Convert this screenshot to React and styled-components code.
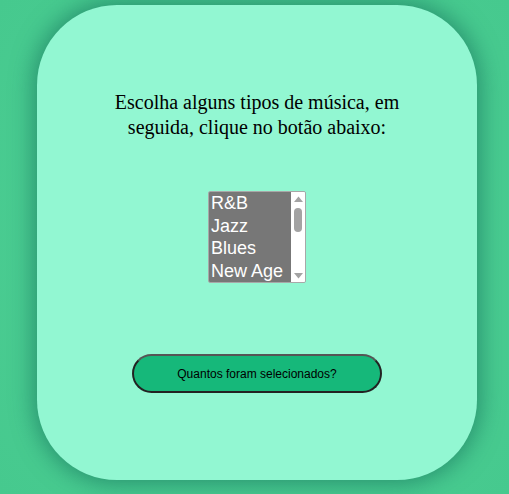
import React from 'react';
import styled, { createGlobalStyle } from 'styled-components';

const GlobalStyle = createGlobalStyle`
  html, body {
    margin: 0;
    padding: 0;
    background: #46c98e;
  }
  body {
    font-family: "Liberation Serif", serif;
  }
`;

const generos = [
  'R&B', 'Jazz', 'Blues', 'New Age', 'Rock', 'Pop', 'Samba',
  'MPB', 'Funk', 'Reggae', 'Forró', 'Clássica', 'Eletrônica',
];

const Seta = ({ down }) => (
  <svg width="9" height="7" viewBox="0 0 9 7">
    <path d={down ? 'M0 1 H9 L4.5 6.5 Z' : 'M0 6 H9 L4.5 0.5 Z'} fill="#a3a3a3" />
  </svg>
);

const App = () => {
  return (
    <Page>
      <GlobalStyle />
      <Card>
        <Title>
          Escolha alguns tipos de música, em
          <br />
          seguida, clique no botão abaixo:
        </Title>
        <Lista role="listbox" aria-multiselectable="true">
          <Opcoes>
            {generos.map((g) => (
              <Opcao key={g} role="option">{g}</Opcao>
            ))}
          </Opcoes>
          <Barra>
            <Seta />
            <Trilho>
              <Polegar />
            </Trilho>
            <Seta down />
          </Barra>
        </Lista>
        <Botao>Quantos foram selecionados?</Botao>
      </Card>
    </Page>
  );
};

const Page = styled.div`
  width: 509px;
  height: 494px;
  box-sizing: border-box;
  padding: 5px 0 0 37px;
  background: radial-gradient(ellipse at center, #4fd096 0%, #46c98e 100%);
`;

const Card = styled.div`
  width: 440px;
  height: 475px;
  box-sizing: border-box;
  border-radius: 80px;
  background: #92f7d2;
  box-shadow: 0 0 22px 4px rgba(20, 110, 90, 0.6);
  display: flex;
  flex-direction: column;
  align-items: center;
  padding-top: 85px;
`;

const Title = styled.p`
  margin: 0;
  font-family: "Liberation Serif", serif;
  font-size: 20px;
  line-height: 25px;
  text-align: center;
  color: #000;
`;

const Lista = styled.div`
  margin-top: 51px;
  width: 98px;
  height: 92px;
  box-sizing: border-box;
  border: 1px solid #a8a8a8;
  border-radius: 2px;
  display: flex;
  overflow: hidden;
`;

const Opcoes = styled.div`
  flex: 1;
  background: #777777;
  overflow: hidden;
`;

const Opcao = styled.div`
  padding: 0 2px;
  height: 22.7px;
  line-height: 22.7px;
  font-family: "Liberation Sans", Arial, sans-serif;
  font-size: 18px;
  color: #ffffff;
  white-space: nowrap;
`;

const Barra = styled.div`
  width: 14px;
  background: #ffffff;
  display: flex;
  flex-direction: column;
  align-items: center;
  padding: 4px 0 3px;
  box-sizing: border-box;
`;

const Trilho = styled.div`
  flex: 1;
  width: 100%;
  display: flex;
  justify-content: center;
  padding-top: 5px;
`;

const Polegar = styled.div`
  width: 8px;
  height: 24px;
  border-radius: 4px;
  background: #a3a3a3;
`;

const Botao = styled.button`
  margin-top: 71px;
  width: 250px;
  height: 39px;
  border-radius: 20px;
  background: #16b87a;
  border: 2px solid #222;
  border-top-color: #555;
  font-family: "Liberation Sans", Arial, sans-serif;
  font-size: 12px;
  color: #000;
  cursor: pointer;
`;

export default App;
